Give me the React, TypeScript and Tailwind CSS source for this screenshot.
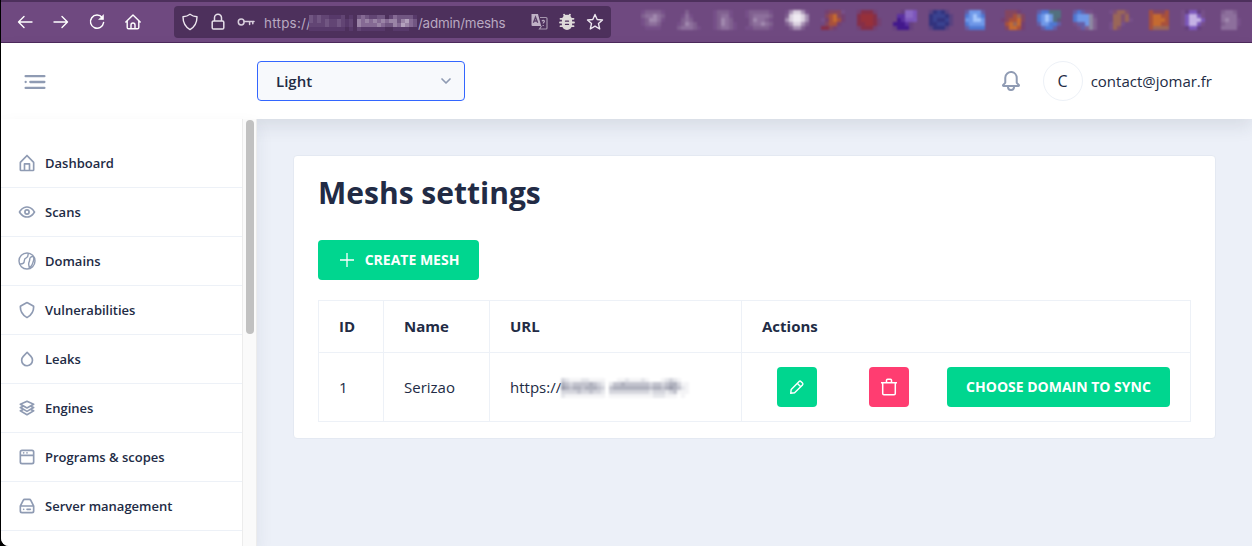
import React from "react";

type Mosaic = { x: number; rows: string[] };

const palette: Record<string, string> = {
  a: "#765088", b: "#80608f", c: "#8d6f9c", d: "#a188ae", w: "#d9cfde", W: "#efeaf2", v: "#a68fb2",
  r: "#852f48", R: "#97303a", o: "#a8503c", O: "#c56a30", q: "#844660", p: "#754070",
  i: "#42188c", I: "#5a30a0", j: "#7c55bb", J: "#8a68c4", e: "#65407f",
  n: "#32337e", N: "#3a4290", m: "#584280",
  l: "#6f98e8", L: "#a3c5fb", k: "#4f78d2", K: "#655ea6", g: "#52707f", G: "#5c5878",
  h: "#9a6658", H: "#805070", s: "#8e88a2", u: "#7c58bb", U: "#c4b2e4",
};

const extensions: Mosaic[] = [
  { x: 641, rows: ["abbbba", "bccdcb", "abddca", "abccb.", ".aaaa."] },
  { x: 677, rows: ["..b..", ".aca.", ".bcb.", "abdcb", "bcccba"] },
  { x: 713, rows: ["abbba", "abcca", "abdcb", "abdcba", "abccba"] },
  { x: 745, rows: ["abbbbba", "abccccb", ".bdccba", ".bccdcb", "aabbbba"] },
  { x: 785, rows: ["avwwva", "bwWWwv", "vwWWwv", "bvwwvb", ".bvvb."] },
  { x: 821, rows: [".pqqqa", ".qoOqp", "apoOop", ".qoop.", "rrqp.."] },
  { x: 857, rows: ["prrrp.", "rRRRr.", "rRRRrp", "rrRRrp", "prrrp."] },
  { x: 893, rows: ["..eJJj", ".IIJJj", ".iIjju", "iiiIe.", "eiiie."] },
  { x: 929, rows: ["mnNnm.", "nNNNnm", "nNnnNm", "nnNNnm", "mnnnm."] },
  { x: 965, rows: ["KlllK", "klLlk", "llLLl", "kllll", "Kkkkk"] },
  { x: 1001, rows: [".qqqp.", ".qqohq", "pqooOq", ".oOhOp", ".qOOop"] },
  { x: 1037, rows: ["Kkkggg", "klLlgg", "klLlgG", "KllkkK", ".KkkK."] },
  { x: 1073, rows: ["KkKaa.", "klllsa", "klllsb", "aKKlsb", ".aKbsb"] },
  { x: 1109, rows: ["aHhhH.", ".hhHh.", ".hhHha", "ahha..", "ahH..."] },
  { x: 1145, rows: [".oqqqo", ".oOOoo", ".oOOOo", ".oOOoo", ".ohhhh"] },
  { x: 1181, rows: ["aeuuea", "auUUua", "auUUUu", "auUUua", ".euue."] },
  { x: 1217, rows: [".bccb.", ".cccc.", ".cdcca", ".bccca", ".cccc."] },
];

function Extensions() {
  return (
    <svg className="block blur-[0.8px]" width="612" height="40" viewBox="0 0 612 40" shapeRendering="crispEdges">
      {extensions.map((e) => (
        <g key={e.x} transform={`translate(${e.x - 640} 8)`}>
          {e.rows.map((row, y) =>
            [...row].map((ch, x) =>
              ch === "." ? null : <rect key={`${x}-${y}`} x={x * 4} y={y * 4} width="4" height="4" fill={palette[ch]} />,
            ),
          )}
        </g>
      ))}
    </svg>
  );
}

const greys = ["#ffffff", "#f4f4f6", "#e6e7eb", "#d5d6dd", "#c3c4ce", "#b0b2be", "#9d9fae"];
const purples = ["#4d305c", "#57396a", "#624574", "#715682", "#856a94", "#9a84a6", "#b3a1bd"];

function Redacted({ rows, tones, cell, className }: { rows: string[]; tones: string[]; cell: number; className: string }) {
  const w = rows[0].length * cell;
  const h = rows.length * cell;
  return (
    <svg className={className} width={w} height={h} viewBox={`0 0 ${w} ${h}`} shapeRendering="crispEdges">
      {rows.map((r, y) =>
        [...r].map((ch, x) => (
          <rect key={`${x}-${y}`} x={x * cell} y={y * cell} width={cell} height={cell} fill={tones[Number(ch)]} />
        )),
      )}
    </svg>
  );
}

function Line({ size = 18, w = 1.4, children, className = "" }: { size?: number; w?: number; children: React.ReactNode; className?: string }) {
  return (
    <svg className={`block shrink-0 ${className}`} width={size} height={size} viewBox="0 0 18 18" fill="none" stroke="currentColor" strokeWidth={w} strokeLinecap="round" strokeLinejoin="round">
      {children}
    </svg>
  );
}

function Glyph({ size = 20, className = "", children }: { size?: number; className?: string; children: React.ReactNode }) {
  return (
    <svg className={`block shrink-0 text-[#8f9bb3] ${className}`} width={size} height={size} viewBox="0 0 24 24" fill="currentColor">
      {children}
    </svg>
  );
}

const items = [
  { label: "Dashboard", icon: <path d="M20.42 10.18L12.71 2.3a1 1 0 0 0-1.42 0l-7.71 7.89A2 2 0 0 0 3 11.62V20a2 2 0 0 0 1.89 2h14.22A2 2 0 0 0 21 20v-8.38a2.07 2.07 0 0 0-.58-1.44zM10 20v-6h4v6zm9 0h-3v-7a1 1 0 0 0-1-1H9a1 1 0 0 0-1 1v7H5v-8.42l7-7.15 7 7.19z" /> },
  { label: "Scans", icon: <><path d="M21.87 11.5c-.64-1.11-4.16-6.68-10.14-6.5-5.53.14-8.73 5-9.6 6.5a1 1 0 0 0 0 1c.63 1.09 4 6.5 9.89 6.5h.25c5.53-.14 8.74-5 9.6-6.5a1 1 0 0 0 0-1zM12.22 17c-4.31.1-7.12-3.59-8-5 1-1.61 3.61-4.9 7.61-5 4.29-.11 7.11 3.59 8 5-1.03 1.61-3.61 4.9-7.61 5z" /><path d="M12 8.5a3.5 3.5 0 1 0 3.5 3.5A3.5 3.5 0 0 0 12 8.5zm0 5a1.5 1.5 0 1 1 1.5-1.5 1.5 1.5 0 0 1-1.5 1.5z" /></> },
  { label: "Domains", icon: <g fill="none" stroke="currentColor" strokeWidth="1.7"><circle cx="12" cy="12" r="9.6" /><path d="M2.8 15.500c4 .6 6-.8 6-4.200 0-2 .8-2.600 2.300-3.100 1.700-.6 2.400-2.600 2.200-5M19.800 6.800c-3-.6-4.600 1.200-4.600 3.600 0 2-1.200 3-1.200 5.200 0 2 .8 2.600.8 5.200M19.800 6.800c1.200 3.400-.2 5.200-.8 7.400s-1.400 4.200-3.800 6" /></g> },
  { label: "Vulnerabilities", icon: <path d="M12 21.85a2 2 0 0 1-1-.25l-.3-.17A15.17 15.17 0 0 1 3 8.23v-.14a2 2 0 0 1 1-1.75l7-3.94a2 2 0 0 1 2 0l7 3.94a2 2 0 0 1 1 1.75v.14a15.17 15.17 0 0 1-7.72 13.2l-.3.17a2 2 0 0 1-.98.25zm0-17.7L5 8.09v.14a13.15 13.15 0 0 0 6.7 11.45l.3.17.3-.17A13.15 13.15 0 0 0 19 8.23v-.14z" /> },
  { label: "Leaks", icon: <path d="M12 21.1a7.4 7.4 0 0 1-5.28-2.28 7.73 7.73 0 0 1 .1-10.77l4.64-4.65a.94.94 0 0 1 .71-.3 1 1 0 0 1 .71.31l4.56 4.72a7.73 7.73 0 0 1-.09 10.77A7.33 7.33 0 0 1 12 21.1zm.13-15.57L8.24 9.45a5.74 5.74 0 0 0-.07 8A5.43 5.43 0 0 0 12 19.1a5.42 5.42 0 0 0 3.9-1.61 5.72 5.72 0 0 0 .06-8z" /> },
  { label: "Engines", icon: <path d="M21 11.35a1 1 0 0 0-.61-.86l-2.15-.92 2.26-1.3a1 1 0 0 0 .5-.92 1 1 0 0 0-.61-.86l-8-3.41a1 1 0 0 0-.78 0l-8 3.41a1 1 0 0 0-.61.86 1 1 0 0 0 .5.92l2.26 1.3-2.15.92a1 1 0 0 0-.61.86 1 1 0 0 0 .5.92l2.26 1.3-2.15.92a1 1 0 0 0-.61.86 1 1 0 0 0 .5.92l8 4.6a1 1 0 0 0 1 0l8-4.6a1 1 0 0 0 .5-.92 1 1 0 0 0-.61-.86l-2.15-.92 2.26-1.3a1 1 0 0 0 .5-.92zm-9-6.26l5.76 2.45L12 10.85 6.24 7.54zm-.5 7.78a1 1 0 0 0 1 0l3.57-2.05 1.69.72L12 14.85l-5.76-3.31 1.69-.72zm6.26 2.67L12 18.85l-5.76-3.31 1.69-.72 3.57 2.05a1 1 0 0 0 1 0l3.57-2.05z" /> },
  { label: "Programs & scopes", icon: <><path fill="none" stroke="currentColor" strokeWidth="2" d="M6 4h12a2 2 0 0 1 2 2v12a2 2 0 0 1-2 2H6a2 2 0 0 1-2-2V6a2 2 0 0 1 2-2zM4 10h16" /><circle cx="8" cy="7.03" r="1" /><circle cx="12" cy="7.03" r="1" /></> },
  { label: "Server management", icon: <><path d="M20.79 11.34l-3.34-6.68A3 3 0 0 0 14.76 3H9.24a3 3 0 0 0-2.69 1.66l-3.34 6.68a2 2 0 0 0-.21.9V18a3 3 0 0 0 3 3h12a3 3 0 0 0 3-3v-5.76a2 2 0 0 0-.21-.9zM8.34 5.55a1 1 0 0 1 .9-.55h5.52a1 1 0 0 1 .9.55L18.38 11H5.62zM18 19H6a1 1 0 0 1-1-1v-5h14v5a1 1 0 0 1-1 1z" /><rect x="11" y="15" width="6" height="2" rx="1" /><circle cx="8" cy="16" r="1" /></> },
];

function BrowserBar() {
  return (
    <div className="flex h-[43px] shrink-0 border-t-2 border-b border-t-[#4d305c] border-b-[#4d2a5c] bg-[#6f4980] text-white">
      <div className="flex w-[173px] items-center gap-[18px] pl-[15px]">
        <Line><path d="M16 9H2.5M8 3.5L2.5 9 8 14.5" /></Line>
        <Line><path d="M2 9h13.5M10 3.5L15.5 9 10 14.5" /></Line>
        <Line w={1.5}><path d="M14.2 4.5A6.6 6.6 0 1 0 15.6 9.5" /><path d="M15.5 2v4.5H11z" fill="currentColor" strokeWidth="0.6" /></Line>
        <Line><path d="M1.8 9L9 2l7.2 7M3.2 8v6.5a1.3 1.3 0 0 0 1.3 1.3h9a1.3 1.3 0 0 0 1.3-1.3V8M7 15.5v-3.5a2 2 0 0 1 4 0v3.5" /></Line>
      </div>
      <div className="mt-1 flex h-8 w-[437px] items-center rounded-[4px] bg-[#4d305c] pl-[7px]">
        <Line className="text-[#eee8f0]"><path d="M9 1.2c2 1.5 4.3 2.3 7 2.6 0 6-2 10-7 12.8C4 13.8 2 9.8 2 3.8c2.7-.3 5-1.1 7-2.6z" /></Line>
        <Line className="ml-[10px] text-[#e6dfe9]" w={1.5}><path d="M4.5 8h9a1.3 1.3 0 0 1 1.3 1.3v5.4a1.3 1.3 0 0 1-1.3 1.3h-9a1.3 1.3 0 0 1-1.3-1.3V9.3A1.3 1.3 0 0 1 4.5 8zM5.5 8V4.8a3.5 3.5 0 0 1 7 0V8" /></Line>
        <Line className="ml-[10px] text-[#d9cfdd]" w={1.5}><circle cx="4.2" cy="9" r="2.9" /><path d="M7.2 8.5H17M12.6 8.5v3M15.8 8.5v2.2" /></Line>
        <div className="ml-[9px] flex items-center pt-0.5 font-[Inter,sans-serif] text-[13.4px] leading-5 tracking-[-0.015em] text-[#b9a9c1]">
          <span className="w-[45px] whitespace-nowrap tracking-[0.02em]">https://</span>
          <Redacted
            className="block shrink-0 blur-[0.6px]"
            tones={purples}
            cell={4}
            rows={["323221112010343223302433331", "323232232120545454545535643", "222232232120544445433546543", "111111111010211111100111100"]}
          />
          <span className="ml-px whitespace-nowrap">/admin/meshs</span>
        </div>
        <div className="mr-[7px] ml-auto flex items-center gap-[10px]">
          <svg className="block shrink-0" width="18" height="18" viewBox="0 0 18 18">
            <path d="M1.5 1h6.5l3.2 12H2.5a1 1 0 0 1-1-1z" fill="#c0b2c6" />
            <path d="M10 4.5h6a1 1 0 0 1 1 1V15a1 1 0 0 1-1 1H9.5l2-3" fill="none" stroke="#a696ae" strokeWidth="1.2" />
            <path d="M3.4 9.8L5.5 4l2.2 5.8M4.2 8h2.6" fill="none" stroke="#5b4069" strokeWidth="1.3" />
            <path d="M12 8.2c.5-1.2 2.5-1 2.4.2-.1 1-1.2 1-1.2 2M13.2 12v1" fill="none" stroke="#b9a9c1" strokeWidth="1.2" />
          </svg>
          <svg className="block shrink-0 text-[#dedad9]" width="18" height="18" viewBox="0 0 18 18" fill="none" stroke="currentColor" strokeWidth="1.8" strokeLinecap="round">
            <path d="M6 1.6l1.5 2M12 1.6l-1.5 2M2.5 5.8h13M2 9.5h14M2.5 13.2h13" />
            <path d="M9 2.6a4.2 4.2 0 0 1 4.2 4.2v5a4.2 4.2 0 0 1-8.4 0v-5A4.2 4.2 0 0 1 9 2.6z" fill="currentColor" />
            <path d="M7.5 8.2h3M7.5 11.4h3" stroke="#4d305c" strokeWidth="1.3" />
          </svg>
          <Line className="text-[#eee8f0]"><path d="M9 1.5l2.2 5 5.3.5-4 3.6 1.2 5.4L9 13.2 4.3 16l1.2-5.4-4-3.6 5.3-.5z" /></Line>
        </div>
      </div>
      <div className="ml-[29px] w-[612px] overflow-hidden"><Extensions /></div>
    </div>
  );
}

function Header() {
  return (
    <header className="relative z-10 flex h-[76px] shrink-0 items-center bg-white shadow-[0_8px_16px_0_rgba(44,51,73,0.1)]">
      <div className="flex w-[256px] pt-0.5 pl-5">
        <Glyph size={28}>
          <circle cx="4" cy="12" r="1" />
          <rect x="7" y="11" width="14" height="2" rx=".94" />
          <rect x="3" y="16" width="18" height="2" rx=".94" />
          <rect x="3" y="6" width="18" height="2" rx=".94" />
        </Glyph>
      </div>
      <button className="flex h-10 w-[208px] items-center justify-between rounded-[4px] border border-[#3366ff] bg-[#f7f9fc] pr-[12px] pl-[18px] text-[15px] font-semibold">
        Light
        <svg width="12" height="8" viewBox="0 0 12 8" fill="none" stroke="#8f9bb3" strokeWidth="1.7" strokeLinecap="round" strokeLinejoin="round"><path d="M2 2l4 4 4-4" /></svg>
      </button>
      <div className="ml-auto flex items-center pr-10 text-[15px]">
        <Glyph size={24}><path d="M20.52 15.21l-1.8-1.81V8.94a6.86 6.86 0 0 0-5.82-6.88 6.74 6.74 0 0 0-7.62 6.67v4.67l-1.8 1.81A1.64 1.64 0 0 0 4.64 18H8v.34A3.84 3.84 0 0 0 12 22a3.84 3.84 0 0 0 4-3.66V18h3.36a1.64 1.64 0 0 0 1.16-2.79zM14 18.34A1.88 1.88 0 0 1 12 20a1.88 1.88 0 0 1-2-1.66V18h4zM5.51 16l1.18-1.18a2 2 0 0 0 .59-1.42V8.73A4.73 4.73 0 0 1 8.9 5.17 4.67 4.67 0 0 1 12.64 4a4.86 4.86 0 0 1 4.08 4.9v4.5a2 2 0 0 0 .58 1.42L18.49 16z" /></Glyph>
        <span className="ml-5 flex size-10 items-center justify-center rounded-full border border-[#edf1f7] text-[16px]">C</span>
        <span className="ml-2">contact@jomar.fr</span>
      </div>
    </header>
  );
}

function Sidebar() {
  return (
    <aside className="relative z-20 flex w-[256px] shrink-0 bg-white shadow-[0_8px_16px_0_rgba(44,51,73,0.08)]">
      <nav className="w-[241px] pt-5">
        {items.map((it) => (
          <a key={it.label} className="flex h-[49px] items-center gap-2 border-b border-[#edf1f7] pt-px pl-4 text-[13px] font-semibold">
            <Glyph className="mb-0.5">{it.icon}</Glyph>
            {it.label}
          </a>
        ))}
      </nav>
      <div className="flex w-[15px] border-x border-[#ececec] bg-[#fafafa] pt-px pl-[3px]">
        <div className="h-[214px] w-2 rounded-full bg-[#c1c1c1]" />
      </div>
    </aside>
  );
}

const cell = "border border-[#edf1f7] px-5 text-left";
const solid = "flex h-10 items-center justify-center rounded-[4px] text-[14px] font-bold text-white";

function Card() {
  return (
    <section className="h-[284px] w-[923px] rounded-[4px] border border-[#e4e9f2] bg-white px-6 pt-[13px]">
      <h1 className="text-[30px] leading-[48px] font-bold">Meshs settings</h1>
      <button className={`${solid} mt-[23px] w-[161px] gap-[11px] bg-[#00d68f] pb-0.5 pl-0.5`}>
        <svg className="mt-0.5" width="14" height="14" viewBox="0 0 14 14" stroke="currentColor" strokeWidth="1.3"><path d="M7 0v14M0 7h14" /></svg>
        CREATE MESH
      </button>
      <table className="mt-5 w-[873px] table-fixed border-collapse text-[15px]">
        <colgroup>
          <col className="w-[65px]" />
          <col className="w-[106px]" />
          <col className="w-[252px]" />
          <col className="w-[449px]" />
        </colgroup>
        <thead>
          <tr className="h-[52px]">
            <th className={cell}>ID</th>
            <th className={cell}>Name</th>
            <th className={cell}>URL</th>
            <th className={cell}>Actions</th>
          </tr>
        </thead>
        <tbody>
          <tr className="h-[69px]">
            <td className={cell}>1</td>
            <td className={cell}>Serizao</td>
            <td className={cell}>
              <div className="flex items-center">
                https://
                <Redacted
                  className="mt-0.5 block shrink-0 blur-[0.8px]"
                  tones={greys}
                  cell={4}
                  rows={["321112211110001121112100012321000", "543444454320244544444434434553110", "654554555430455555555545545654210", "333343343320333333333323332341110", "211111111110111111111112221110100"]}
                />
              </div>
            </td>
            <td className={cell}>
              <div className="flex items-center pl-[15px]">
                <button className={`${solid} w-10 bg-[#00d68f]`}>
                  <svg width="16" height="16" viewBox="0 0 16 16" fill="none" stroke="currentColor" strokeWidth="1.4" strokeLinejoin="round"><path d="M1.7 14.3l.5-3.9 7.9-7.9a1.3 1.3 0 0 1 1.8 0l1.6 1.6a1.3 1.3 0 0 1 0 1.8l-7.9 7.9zM8.3 4.3l3.4 3.4" /></svg>
                </button>
                <button className={`${solid} ml-[52px] w-10 bg-[#ff3d71]`}>
                  <svg width="18" height="18" viewBox="0 0 18 18" fill="none" stroke="currentColor" strokeWidth="1.5" strokeLinejoin="round"><path d="M1 4.7h16M2.7 4.7v10.8a1.2 1.2 0 0 0 1.2 1.2h10.2a1.2 1.2 0 0 0 1.2-1.2V4.7M6.5 4.5V2.3a1 1 0 0 1 1-1h3a1 1 0 0 1 1 1v2.2" /></svg>
                </button>
                <button className={`${solid} ml-[38px] w-[223px] bg-[#00d68f] pb-0.5 whitespace-nowrap`}>CHOOSE DOMAIN TO SYNC</button>
              </div>
            </td>
          </tr>
        </tbody>
      </table>
    </section>
  );
}

export default function App() {
  return (
    <div className="h-[546px] w-[1252px] overflow-hidden bg-black font-['Open_Sans',sans-serif] text-[#222b45]">
      <div className="ml-px flex h-full flex-col overflow-hidden rounded-bl-[8px] bg-[#edf1f7]">
        <BrowserBar />
        <Header />
        <div className="flex min-h-0 flex-1">
          <Sidebar />
          <main className="flex-1 bg-[#ecf0f8] pt-9 pl-9"><Card /></main>
        </div>
      </div>
    </div>
  );
}
